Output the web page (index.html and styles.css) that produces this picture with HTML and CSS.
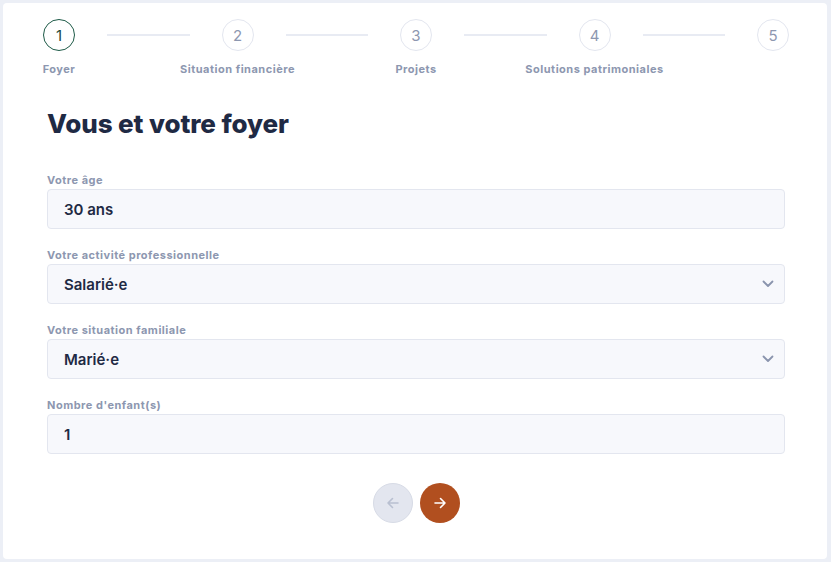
FILE: index.html
```html
<!DOCTYPE html>
<html lang="fr">
<head>
    <meta charset="UTF-8">
    <meta name="viewport" content="width=device-width, initial-scale=1.0">
    <title>Vous et votre foyer</title>
    <link rel="stylesheet" href="styles.css">
</head>
<body>
    <div class="card">
        <!-- Stepper -->
        <div class="stepper">
            <div class="step active">
                <span class="step-num">1</span>
                <span class="step-label">Foyer</span>
            </div>
            <div class="step-line"></div>
            <div class="step">
                <span class="step-num">2</span>
                <span class="step-label">Situation financière</span>
            </div>
            <div class="step-line"></div>
            <div class="step">
                <span class="step-num">3</span>
                <span class="step-label">Projets</span>
            </div>
            <div class="step-line"></div>
            <div class="step">
                <span class="step-num">4</span>
                <span class="step-label">Solutions patrimoniales</span>
            </div>
            <div class="step-line"></div>
            <div class="step">
                <span class="step-num">5</span>
                <span class="step-label"></span>
            </div>
        </div>

        <h1>Vous et votre foyer</h1>

        <!-- Form -->
        <div class="field">
            <label>Votre âge</label>
            <input type="text" class="control" value="30 ans">
        </div>
        <div class="field">
            <label>Votre activité professionnelle</label>
            <div class="select-wrap">
                <select class="control">
                    <option>Salarié·e</option>
                </select>
                <svg class="chevron" viewBox="0 0 12 8" width="12" height="8"><path d="M1.5 1.5 6 6l4.5-4.5" fill="none" stroke="#8a94ad" stroke-width="1.8" stroke-linecap="round" stroke-linejoin="round"/></svg>
            </div>
        </div>
        <div class="field">
            <label>Votre situation familiale</label>
            <div class="select-wrap">
                <select class="control">
                    <option>Marié·e</option>
                </select>
                <svg class="chevron" viewBox="0 0 12 8" width="12" height="8"><path d="M1.5 1.5 6 6l4.5-4.5" fill="none" stroke="#8a94ad" stroke-width="1.8" stroke-linecap="round" stroke-linejoin="round"/></svg>
            </div>
        </div>
        <div class="field">
            <label>Nombre d'enfant(s)</label>
            <input type="text" class="control" value="1">
        </div>

        <div class="nav">
            <button class="nav-btn prev" disabled>
                <svg viewBox="0 0 16 16" width="16" height="16"><path d="M13 8H3M7.5 3.5 3 8l4.5 4.5" fill="none" stroke="#b9c0d1" stroke-width="1.6" stroke-linecap="round" stroke-linejoin="round"/></svg>
            </button>
            <button class="nav-btn next">
                <svg viewBox="0 0 16 16" width="16" height="16"><path d="M3 8h10M8.5 3.5 13 8l-4.5 4.5" fill="none" stroke="#ffffff" stroke-width="1.6" stroke-linecap="round" stroke-linejoin="round"/></svg>
            </button>
        </div>
    </div>
</body>
</html>
```

FILE: styles.css
```css
body {
    margin: 0;
    padding: 3px 4px 3px 3px;
    background: #eceff6;
    font-family: Inter, "Noto Sans", sans-serif;
    color: #1f2a44;
}

.card {
    background: #fff;
    border-radius: 4px;
    height: 556px;
    box-sizing: border-box;
    padding: 16px 42px 0 44px;
}

/* Stepper */
.stepper {
    display: flex;
    align-items: flex-start;
    margin: 0 -4px;
}

.step {
    width: 32px;
    display: flex;
    flex-direction: column;
    align-items: center;
}

.step-num {
    width: 32px;
    height: 32px;
    box-sizing: border-box;
    border: 1px solid #e3e6ef;
    border-radius: 50%;
    display: flex;
    align-items: center;
    justify-content: center;
    font-size: 15px;
    color: #8d97b0;
}

.step.active .step-num {
    border: 1.5px solid #1d5a47;
    color: #1d4a3c;
}

.step-label {
    margin-top: 11px;
    font-size: 11px;
    line-height: 14px;
    height: 14px;
    font-weight: 700;
    letter-spacing: 0.5px;
    color: #8d97b0;
    white-space: nowrap;
}

.step-line {
    flex: 1;
    height: 2px;
    margin: 15px 32px 0;
    background: #e8ebf3;
}

h1 {
    margin: 32px 0 33px;
    font-size: 26px;
    line-height: 32px;
    font-weight: 800;
    color: #1f2a44;
    letter-spacing: -0.1px;
}

/* Form fields */
.field {
    margin-bottom: 19px;
}

.field label {
    display: block;
    font-size: 11px;
    line-height: 14px;
    font-weight: 700;
    letter-spacing: 0.5px;
    color: #8d97b0;
    margin-bottom: 2px;
}

.control {
    display: block;
    width: 100%;
    height: 40px;
    box-sizing: border-box;
    padding: 0 16px;
    border: 1px solid #e3e6ef;
    border-radius: 4px;
    background: #f7f8fc;
    font-family: inherit;
    font-size: 15px;
    font-weight: 600;
    color: #1f2a44;
    outline: none;
    appearance: none;
    -webkit-appearance: none;
}

.select-wrap {
    position: relative;
}

.chevron {
    position: absolute;
    right: 11px;
    top: 16px;
    pointer-events: none;
}

/* Navigation buttons */
.nav {
    display: flex;
    justify-content: center;
    gap: 7px;
    margin-top: 29px;
}

.nav-btn {
    width: 40px;
    height: 40px;
    border-radius: 50%;
    border: none;
    padding: 0;
    display: flex;
    align-items: center;
    justify-content: center;
    cursor: pointer;
}

.nav-btn.prev {
    background: #e3e6ef;
    border: 1px solid #d7dbe6;
    cursor: default;
}

.nav-btn.next {
    background: #b14f1f;
}
```
